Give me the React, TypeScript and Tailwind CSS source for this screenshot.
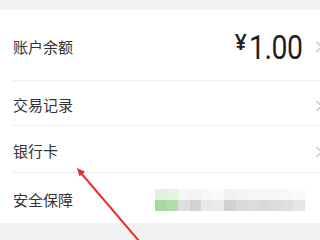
import React from "react";

const font = { fontFamily: '"Noto Sans", "Noto Sans CJK SC", sans-serif' };

function Chevron() {
  return (
    <svg width="8" height="12" viewBox="0 0 8 12" className="shrink-0">
      <polyline points="1.5,1 6.5,6 1.5,11" fill="none" stroke="#c9c9c9" strokeWidth="1.5" />
    </svg>
  );
}

// pixelated (censored) value in the last row
const topCells = ["#e3f1e1", "#e6f2e4", "#f6f6f6", "#f3f3f3", "#f8f8f8", "#fafafa", "#f1f1f1", "#f4f4f4", "#f6f6f6", "#f5f5f5", "#f7f7f7", "#f8f8f8", "#fafafa"];
const bottomCells = ["#a9d7a1", "#b3dcab", "#dedede", "#d3d3d3", "#e8e8e8", "#eaeaea", "#d1d1d1", "#d9d9d9", "#dcdcdc", "#dadada", "#dddddd", "#e0e0e0", "#e6e6e6"];

function Mosaic() {
  return (
    <div className="flex flex-col w-[150px]">
      <div className="flex h-[11px]">
        {topCells.map((c, i) => (
          <div key={i} className="flex-1" style={{ background: c }} />
        ))}
      </div>
      <div className="flex h-[11px]">
        {bottomCells.map((c, i) => (
          <div key={i} className="flex-1" style={{ background: c }} />
        ))}
      </div>
    </div>
  );
}

export default function App() {
  const rows = [
    { label: "交易记录", h: "h-[45px]" },
    { label: "银行卡", h: "h-[47px]" },
  ];

  return (
    <div className="relative w-[320px] h-[240px] overflow-hidden bg-[#f2f2f2]" style={font}>
      <div className="mt-[10px] w-[324px] bg-white">
        {/* 余额 */}
        <div className="pl-[13px]">
          <div className="flex items-center justify-between border-b border-[#ededed] h-[71px] pt-[4px] pr-[1px]">
            <span className="text-[15px] text-[#333]">账户余额</span>
            <div className="flex items-center gap-[13px]">
              <div className="flex items-start">
                <span className="text-[21px] font-semibold text-[#222] leading-none mt-[1px] mr-[2px]">¥</span>
                <span
                  className="inline-block text-[33px] leading-none text-[#1f1f1f] tracking-[-0.5px] origin-left scale-x-[0.86] -mr-[9px]"
                  style={{ fontFamily: "Roboto, sans-serif" }}
                >
                  1.00
                </span>
              </div>
              <Chevron />
            </div>
          </div>
        </div>

        {rows.map((r) => (
          <div key={r.label} className="pl-[13px]">
            <div className={`flex items-center justify-between border-b border-[#ededed] pt-[5px] pr-[1px] ${r.h}`}>
              <span className="text-[15px] text-[#333]">{r.label}</span>
              <Chevron />
            </div>
          </div>
        ))}

        {/* 安全保障 */}
        <div className="flex items-center justify-between h-[50px] pl-[13px] pt-[4px] pr-[19px]">
          <span className="text-[15px] text-[#333]">安全保障</span>
          <Mosaic />
        </div>
      </div>

      <svg className="absolute inset-0 pointer-events-none" width="320" height="240" viewBox="0 0 320 240">
        <line x1="139" y1="241" x2="81" y2="173" stroke="#e3302b" strokeWidth="2" />
        <polygon points="77,168 85,171.8 79.5,176.4" fill="#e3302b" />
      </svg>
    </div>
  );
}
